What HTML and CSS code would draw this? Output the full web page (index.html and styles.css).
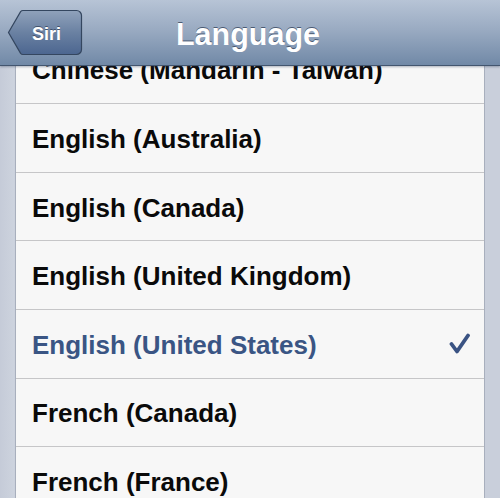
FILE: index.html
```html
<!DOCTYPE html>
<html>
<head>
<meta charset="utf-8">
<link rel="stylesheet" href="styles.css">
</head>
<body>
<div class="screen">
  <header class="navbar">
    <div class="back">
      <svg class="back-shape" viewBox="0 0 76 47" width="76" height="47">
        <defs>
          <linearGradient id="bg" x1="0" y1="0" x2="0" y2="1">
            <stop offset="0" stop-color="#90a2bb"/>
            <stop offset="0.5" stop-color="#6a81a2"/>
            <stop offset="1" stop-color="#4c6690"/>
          </linearGradient>
        </defs>
        <path d="M16 1.5 H69.5 a5 5 0 0 1 5 5 V40.5 a5 5 0 0 1 -5 5 H16 a3 3 0 0 1 -2.4 -1.2 L1.5 23.5 L13.6 2.7 a3 3 0 0 1 2.4 -1.2 Z" fill="url(#bg)" stroke="#34465f" stroke-width="1.2"/>
      </svg>
      <span class="back-label">Siri</span>
    </div>
    <h1 class="title">Language</h1>
  </header>
  <main class="content">
    <ul class="list">
      <li class="row">Chinese (Mandarin - Taiwan)</li>
      <li class="row">English (Australia)</li>
      <li class="row">English (Canada)</li>
      <li class="row">English (United Kingdom)</li>
      <li class="row selected">English (United States)
        <svg class="check" viewBox="0 0 22 22" width="22" height="22"><path d="M2.5 11 L8 18.5 L19 2.5" fill="none" stroke="#3a5383" stroke-width="3.8" stroke-linecap="round" stroke-linejoin="round"/></svg>
      </li>
      <li class="row">French (Canada)</li>
      <li class="row">French (France)</li>
    </ul>
  </main>
</div>
</body>
</html>
```

FILE: styles.css
```css
* { box-sizing: border-box; }
html, body { margin: 0; padding: 0; }
body {
  font-family: "Liberation Sans", Arial, sans-serif;
  background: #c9cfdb;
  width: 500px;
  height: 498px;
  overflow: hidden;
}
.screen {
  position: relative;
  width: 500px;
  height: 498px;
  overflow: hidden;
  background: linear-gradient(to right, #c5cbd8 0, #cdd3de 14px, #c9cfdb 15px);
}
.navbar {
  position: absolute;
  top: 0;
  left: 0;
  right: 0;
  height: 66px;
  z-index: 2;
  display: flex;
  align-items: center;
  justify-content: center;
  padding-top: 3px;
  background: linear-gradient(to bottom, #b7c4d6 0%, #9aabc2 45%, #7189a7 100%);
  border-bottom: 1px solid #43566f;
  box-shadow: 0 1px 2px rgba(40, 55, 80, 0.35);
}
.back {
  position: absolute;
  left: 7px;
  top: 9px;
  width: 76px;
  height: 47px;
  display: flex;
  align-items: center;
  padding-left: 25px;
  padding-top: 3px;
}
.back-shape {
  position: absolute;
  left: 0;
  top: 0;
}
.back-label {
  position: relative;
  color: #fff;
  font-weight: bold;
  font-size: 18px;
  text-shadow: 0 -1px 0 rgba(30, 45, 70, 0.6);
}
.title {
  margin: 0 0 0 -4px;
  color: #fff;
  font-size: 30.5px;
  font-weight: bold;
  text-shadow: 0 -1px 0 rgba(40, 55, 80, 0.7);
}
.content {
  padding-top: 35.6px;
}
.list {
  list-style: none;
  margin: 0 15px;
  padding: 0;
  background: #f7f7f7;
  border-left: 1px solid #a8afbd;
  border-right: 1px solid #a8afbd;
}
.row {
  height: 68.6px;
  display: flex;
  align-items: center;
  justify-content: space-between;
  padding: 3px 13px 0 16px;
  border-bottom: 1px solid #c6c6c8;
  font-size: 26px;
  font-weight: bold;
  color: #0a0a0a;
}
.row.selected {
  color: #3a5584;
}
.check {
  display: block;
  margin-top: -2px;
}
```
